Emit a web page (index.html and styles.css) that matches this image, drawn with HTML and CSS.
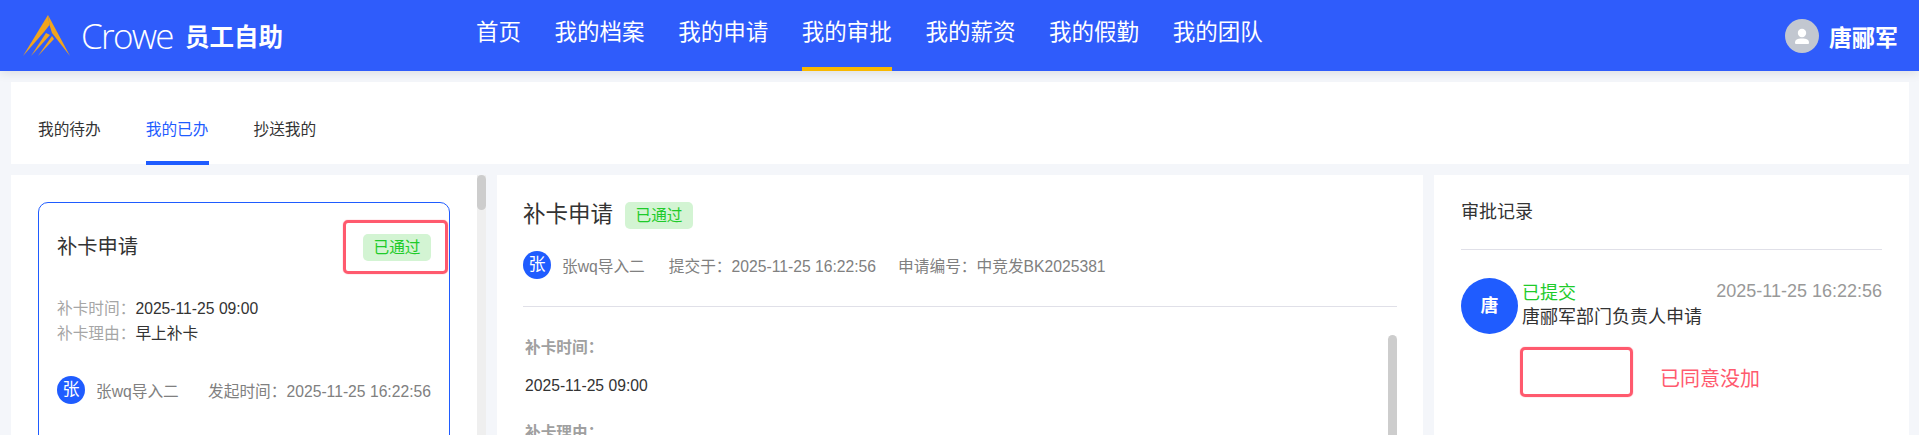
FILE: index.html
```html
<!DOCTYPE html>
<html lang="zh-CN">
<head>
<meta charset="utf-8">
<title>员工自助</title>
<link rel="stylesheet" href="styles.css">
</head>
<body>
<header class="topbar">
  <div class="brand">
    <svg class="logo" viewBox="0 0 48 42" aria-hidden="true">
      <path class="gold" d="M25 0 L47 41 L29 18 L26.5 10 Z"/>
      <path class="gold" d="M25 0 L0 41 L21 17 L26.5 10 Z"/>
      <path class="gold" d="M23 18 L8 41 L27 20 Z"/>
      <path class="gold" d="M29 21 L15 41 L31 24 Z"/>
    </svg>
    <span class="wordmark">Crowe</span>
    <span class="product">员工自助</span>
  </div>
  <nav class="nav">
    <a class="nav-item">首页</a>
    <a class="nav-item">我的档案</a>
    <a class="nav-item">我的申请</a>
    <a class="nav-item active">我的审批</a>
    <a class="nav-item">我的薪资</a>
    <a class="nav-item">我的假勤</a>
    <a class="nav-item">我的团队</a>
  </nav>
  <div class="user">
    <span class="user-avatar">
      <svg viewBox="0 0 34 34" aria-hidden="true">
        <circle class="user-glyph" cx="17" cy="14" r="4.2"/>
        <path class="user-glyph" d="M10 24 C10 20.5 12.5 19.6 17 19.6 C21.5 19.6 24 20.5 24 24 Q24 25 23 25 L11 25 Q10 25 10 24 Z"/>
      </svg>
    </span>
    <span class="user-name">唐郦军</span>
  </div>
</header>

<main class="page">
  <section class="tabs">
    <a class="tab">我的待办</a>
    <a class="tab current">我的已办</a>
    <a class="tab">抄送我的</a>
  </section>

  <div class="columns">
    <section class="list-col">
      <div class="list-panel">
        <article class="card">
          <div class="card-head">
            <h3 class="card-title">补卡申请</h3>
            <span class="tag">已通过</span>
            <span class="mark-tag"></span>
          </div>
          <div class="card-body">
            <p class="line"><span class="muted">补卡时间：</span>2025-11-25 09:00</p>
            <p class="line"><span class="muted">补卡理由：</span>早上补卡</p>
          </div>
          <div class="card-foot">
            <span class="avatar">张</span>
            <span class="person">张wq导入二</span>
            <span class="started">发起时间：2025-11-25 16:22:56</span>
          </div>
        </article>
      </div>
      <div class="scrollbar"><div class="thumb-list"></div></div>
    </section>

    <section class="detail-col">
      <div class="detail-head">
        <h2 class="detail-title">补卡申请</h2>
        <span class="tag">已通过</span>
      </div>
      <div class="detail-meta">
        <span class="avatar">张</span>
        <span class="person">张wq导入二</span>
        <span class="submitted first">提交于：2025-11-25 16:22:56</span>
        <span class="submitted">申请编号：中竞发BK2025381</span>
      </div>
      <div class="detail-rest">
        <div class="fields">
          <div class="field-label">补卡时间：</div>
          <div class="field-value">2025-11-25 09:00</div>
          <div class="field-label">补卡理由：</div>
        </div>
        <div class="scrollbar-inner"></div>
      </div>
    </section>

    <aside class="record-col">
      <h3 class="record-title">审批记录</h3>
      <div class="record">
        <span class="avatar-lg">唐</span>
        <div class="record-main">
          <div class="record-top">
            <span class="record-state">已提交</span>
            <span class="record-time">2025-11-25 16:22:56</span>
          </div>
          <div class="record-desc">唐郦军部门负责人申请</div>
        </div>
      </div>
      <div class="note">
        <span class="mark-box"></span>
        <span class="note-text">已同意没加</span>
      </div>
    </aside>
  </div>
</main>
</body>
</html>
```

FILE: styles.css
```css
* { box-sizing: border-box; }
html, body { margin: 0; height: 100%; overflow: hidden; }
body {
  background: #f4f6fa;
  font-family: "Liberation Sans", "Noto Sans CJK SC", sans-serif;
  color: #333;
}
h2, h3, p { margin: 0; font-weight: 400; }

.topbar {
  height: 71px;
  background: #2f5cfb;
  display: flex;
  align-items: center;
  box-shadow: 0 2px 10px rgba(0, 0, 0, .1);
  position: relative;
  color: #fff;
}
.brand { width: 476px; padding-left: 23px; display: flex; align-items: center; flex: none; }
.logo { width: 48px; height: 42px; flex: none; }
.gold { fill: #f0a41e; }
.wordmark {
  font-family: "Open Sans", sans-serif;
  font-weight: 300;
  font-size: 35px;
  letter-spacing: -1.7px;
  margin-left: 10px;
  line-height: 42px;
}
.product { font-size: 24.5px; font-weight: 700; margin-left: 12px; }

.nav { display: flex; gap: 33.6px; height: 71px; flex: 1; }
.nav-item { font-size: 22.5px; line-height: 66px; height: 71px; }
.nav-item.active { border-bottom: 4px solid #f8b800; }

.user { display: flex; align-items: center; gap: 10px; margin-right: 21px; }
.user-avatar { width: 34px; height: 34px; border-radius: 50%; background: #c2c7d0; display: block; }
.user-avatar svg { display: block; width: 34px; height: 34px; }
.user-glyph { fill: #fff; }
.user-name { font-size: 23px; font-weight: 700; }

.page { padding: 11px 10px 0 11px; }
.tabs {
  height: 82px;
  background: #fff;
  display: flex;
  gap: 45px;
  padding-left: 27px;
}
.tab { font-size: 15.7px; line-height: 24px; height: 83px; padding-top: 36px; color: #333; }
.tab.current { color: #1f5cff; border-bottom: 4px solid #1f5cff; }

.columns { display: flex; margin-top: 11px; gap: 11px; height: 260px; }
.list-col { width: 475px; display: flex; flex: none; background: #fff; overflow: hidden; }
.list-panel { width: 466px; padding: 27px 27px 0; background: #fff; }
.scrollbar { width: 9px; background: #efefef; flex: none; }
.thumb-list { height: 35px; background: #cdcdcd; border-radius: 5px; }

.card {
  width: 412px;
  height: 300px;
  border: 1px solid #1f5cff;
  border-radius: 10px 10px 0 0;
  padding: 18px 18px 0;
}
.card-head { display: flex; align-items: center; justify-content: space-between; height: 52px; position: relative; }
.card-title { font-size: 20.3px; line-height: 28px; }
.tag {
  width: 68px;
  height: 27px;
  line-height: 27px;
  border-radius: 5px;
  background: #d3f4d3;
  color: #1ecb2a;
  font-size: 15.7px;
  text-align: center;
}
.mark-tag {
  position: absolute;
  right: -17px;
  top: -1px;
  width: 105px;
  height: 54px;
  border: 3px solid #ff5a6e;
  border-radius: 5px;
  box-shadow: 0 0 1px #ff5a6e;
}
.card-body { margin-top: 23px; }
.line { font-size: 15.7px; line-height: 25px; color: #333; }
.muted { color: #a6a6a6; }
.card-foot { display: flex; align-items: center; margin-top: 30px; height: 28px; font-size: 15.7px; color: #808080; }
.avatar {
  width: 28px;
  height: 28px;
  border-radius: 50%;
  background: #1f5cff;
  color: #fff;
  font-size: 17px;
  line-height: 28px;
  text-align: center;
  flex: none;
}
.person { margin-left: 11px; white-space: nowrap; }
.started { margin-left: auto; white-space: nowrap; }

.detail-col { width: 926px; flex: none; background: #fff; padding: 27px 26px 0 26px; overflow: hidden; }
.detail-head { display: flex; align-items: center; gap: 12px; height: 27px; }
.detail-title { font-size: 22.5px; line-height: 27px; position: relative; top: -1px; }
.detail-meta { display: flex; align-items: center; margin-top: 22px; height: 28px; font-size: 15.7px; color: #808080; }
.submitted { margin-left: 22px; white-space: nowrap; }
.submitted.first { margin-left: 24px; }
.detail-rest {
  margin-top: 27px;
  border-top: 1px solid #e0e0e8;
  display: flex;
  justify-content: space-between;
}
.fields { padding: 29px 0 0 2px; }
.field-label { font-size: 15.7px; font-weight: 700; color: #a0a0a0; line-height: 24px; }
.field-value { font-size: 15.7px; line-height: 24px; margin: 14px 0 23px; color: #333; }
.scrollbar-inner { width: 9px; height: 110px; margin-top: 28px; background: #cdcdcd; border-radius: 5px 5px 0 0; }

.record-col { flex: 1; background: #fff; padding: 25px 27px 0; }
.record-title { font-size: 18px; line-height: 24px; padding-bottom: 25px; border-bottom: 1px solid #e0e0e8; height: 50px; color: #333; }
.record { display: flex; margin-top: 28px; }
.avatar-lg {
  width: 57px;
  height: 56px;
  border-radius: 50%;
  background: #1f5cff;
  color: #fff;
  font-size: 18px;
  font-weight: 700;
  line-height: 56px;
  text-align: center;
  flex: none;
}
.record-main { flex: 1; margin-left: 4px; }
.record-top { display: flex; justify-content: space-between; align-items: center; height: 26px; }
.record-state { font-size: 18px; color: #1ecb2a; }
.record-time { font-size: 18px; color: #999; }
.record-desc { font-size: 18px; line-height: 27px; color: #333; }
.note { display: flex; align-items: center; margin: 13px 0 0 59px; }
.mark-box { width: 113px; height: 50px; border: 3px solid #ff5a6e; border-radius: 5px; box-shadow: 0 0 1px #ff5a6e; }
.note-text { font-size: 20px; color: #ff5a6e; margin-left: 27px; margin-top: 10px; }
```
